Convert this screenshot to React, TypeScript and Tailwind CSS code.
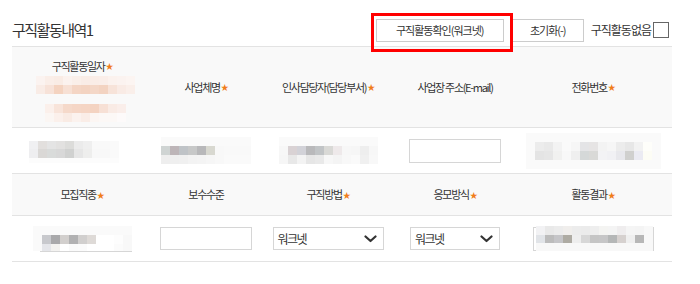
import React from "react";

type MosaicProps = { rows: string[][]; cw?: number; rh?: number[]; className?: string };

function Mosaic({ rows, cw = 9, rh, className = "" }: MosaicProps) {
  return (
    <div className={"flex flex-col " + className}>
      {rows.map((r, i) => (
        <div key={i} className="flex">
          {r.map((c, j) => (
            <div key={j} style={{ background: c, width: cw, height: rh ? rh[i] : 9 }} />
          ))}
        </div>
      ))}
    </div>
  );
}

const Star = () => <span className="text-[#f07d1b] text-[8px] ml-[1px]">★</span>;

const Head = ({ children, star }: { children: React.ReactNode; star?: boolean }) => (
  <div className="flex items-center justify-center text-[11px] tracking-[-1.3px] text-[#333]">
    <span>{children}</span>
    {star && <Star />}
  </div>
);

const Chevron = () => (
  <svg width="13" height="8" viewBox="0 0 13 8" className="shrink-0">
    <path d="M1.5 1.5 L6.5 6 L11.5 1.5" fill="none" stroke="#333" strokeWidth="2.2" strokeLinecap="round" strokeLinejoin="round" />
  </svg>
);

const Select = ({ w }: { w: string }) => (
  <div className={"h-[23px] border border-[#d6d6d6] bg-white flex items-center justify-between pl-[4px] pr-[6px] " + w}>
    <span className="text-[12px] tracking-[-1.5px] text-[#333]">워크넷</span>
    <Chevron />
  </div>
);

const cols = "grid grid-cols-[140px_108px_136px_118px_158px] border-b border-[#e3e3e3]";

export default function App() {
  const L = "#fbf3f0";
  const g = "#f9f9f9";
  return (
    <div className="relative w-[700px] h-[284px] bg-white" style={{ fontFamily: '"Noto Sans CJK KR", "Noto Sans", sans-serif' }}>
      <div className="ml-[12px] w-[660px]">
        <div className="h-[47px] pt-[14px] flex items-center justify-between border-b border-[#e3e3e3]">
          <div className="text-[15px] tracking-[-1.5px] text-[#333] leading-none mt-[-2px]">구직활동내역1</div>
          <div className="flex items-center pr-[3px]">
            <button className="w-[128px] h-[23px] border border-[#ccc] bg-white text-[11px] tracking-[-1px] text-[#333]">구직활동확인(워크넷)</button>
            <button className="ml-[8px] w-[72px] h-[23px] border border-[#ccc] bg-white text-[11px] tracking-[-1px] text-[#333]">초기화(-)</button>
            <span className="ml-[7px] text-[12px] tracking-[-1px] text-[#333]">구직활동없음</span>
            <span className="ml-[2px] w-[16px] h-[16px] border border-[#666] bg-white" />
          </div>
        </div>

        <div className={cols + " h-[81px] bg-[#f9f9f9]"}>
          <div className="flex flex-col items-center pt-[11px]">
            <Head star>구직활동일자</Head>
            <Mosaic
              className="mt-[1px] ml-[7px]"
              rows={[
                [L, "#faeee8", "#f9ece5", "#fbf2ee", "#faefe9", "#f9ece6", "#faede7", "#faeee9", "#fbf2ee", L, "#fcf5f2"],
                ["#f9ece6", "#f7e2d8", "#f4d3c0", "#f7e0d4", "#f4d5c4", "#f3d3c1", "#f4d7c7", "#f3d3c1", "#f7e3d9", "#f9ebe5", "#faefea"],
              ]}
            />
            <Mosaic
              className="mt-[10px] ml-[7px]"
              rows={[
                ["#fbf0eb", "#f8e4da", "#f5d9ca", "#f5d6c6", "#f5d5c4", "#f4d3c1", "#f7e0d5", "#f9ebe5", "#faeeea"],
                ["#fbf6f3", "#fbf0eb", "#f9ebe4", "#fbf2ee", "#faede7", "#fcf6f3", "#fcf8f6", "#fcf8f6", "#fdfafa"],
              ]}
            />
          </div>
          <Head star>사업체명</Head>
          <Head star>인사담당자(담당부서)</Head>
          <Head>사업장 주소(E-mail)</Head>
          <Head star>전화번호</Head>
        </div>

        <div className={cols + " h-[46px]"}>
          <div className="flex items-center justify-center">
            <Mosaic
              className="mr-[16px] mt-[2px]"
              rows={[
                ["#f0f0f2", "#e2dfdd", "#e4e4e4", "#e2e1e0", "#dcdcda", "#ebebeb", "#efefef", g, g, "#fafafa"],
                ["#eeeef0", "#dad8d6", "#d9dbda", "#d8d8d8", "#d0d1d0", "#e6e6e6", "#eeeeed", "#f8f8f8", "#f8f8f8", "#fafafa"],
                Array(10).fill("#fcfcfc"),
              ]}
              rh={[8, 9, 5]}
            />
          </div>
          <div className="flex items-center justify-center">
            <Mosaic
              rows={[
                Array(10).fill("#fafafa"),
                ["#cfd4d3", "#bdb5b8", "#bfc3c7", "#c7c8c8", "#b8b8ba", "#d8d8d0", "#f8f8f8", g, g, g],
                ["#eeeeee", "#efefef", "#f0f0f0", "#f3f3f3", "#f4f4f4", "#f6f6f6", "#f8f8f8", "#fafafa", "#fafafa", "#fafafa"],
              ]}
            />
          </div>
          <div className="flex items-center justify-center">
            <Mosaic
              rows={[
                Array(11).fill("#fafafa"),
                ["#f7f7f7", "#d9d2d4", "#d2d2d8", "#b9b9bb", "#c1c4c6", "#d9d9d6", "#eee9ea", "#f7f7f7", "#f6f6f6", "#eeeeee", "#f7f7f7"],
                ["#f6f6f6", "#e8e8e8", "#f3f3f3", "#e6e6e6", "#e9e9e9", "#f7f7f7", "#f4f4f4", "#f8f8f8", "#fafafa", "#f0f0f0", "#f8f8f8"],
              ]}
            />
          </div>
          <div className="flex items-center justify-center">
            <div className="w-[92px] h-[24px] border border-[#d6d6d6] bg-white" />
          </div>
          <div className="flex items-center justify-center">
            <Mosaic
              rows={[
                Array(15).fill("#fafafa"),
                ["#fafafa", "#ececec", "#e9e9e9", "#f3f3f3", "#fafafa", "#f6f6f6", "#e4e4e6", "#e6e4e4", "#f3f3f3", "#f6f6f6", "#ececec", "#e7e7e7", "#f2f2f2", "#fefefa", "#fafafa"],
                ["#fafafa", "#e4e4e4", "#e6e6e6", "#f1f1f0", "#f8f8f8", "#efefef", "#d5d8d8", "#d9d9d7", "#f3f3f5", "#f1f1f4", "#e8e8ec", "#d0d0ce", "#ebebf2", "#fdfdf5", "#fafafa"],
                Array(15).fill("#fafafa"),
              ]}
            />
          </div>
        </div>

        <div className={cols + " h-[42px] bg-[#f9f9f9]"}>
          <Head star>모집직종</Head>
          <Head>보수수준</Head>
          <Head star>구직방법</Head>
          <Head star>응모방식</Head>
          <Head star>활동결과</Head>
        </div>

        <div className={cols + " h-[46px]"}>
          <div className="flex items-center justify-center">
            <div className="flex flex-col mt-[1px]">
              <Mosaic
                rows={[
                  Array(11).fill("#fafafa"),
                  ["#fafafa", "#c8c9cd", "#a9a9ab", "#d2cfcd", "#b1b1b2", "#d1cfce", "#dedad7", "#ffffff", "#ffffff", "#fdfdfd", "#f8f8f8"],
                  ["#fafafa", "#e5e6ea", "#f3f2f0", "#ffffff", "#fafafa", "#fbfbfb", "#ffffff", "#ffffff", "#ffffff", "#fbfbfb", "#f8f8f8"],
                ]}
                rh={[9, 9, 7]}
              />
              <div className="ml-[7px] h-[1px] bg-[#d6d6d6]" />
            </div>
          </div>
          <div className="flex items-center justify-center">
            <div className="w-[92px] h-[23px] border border-[#d6d6d6] bg-white" />
          </div>
          <div className="flex items-center justify-center">
            <Select w="w-[111px]" />
          </div>
          <div className="flex items-center justify-center">
            <Select w="w-[90px]" />
          </div>
          <div className="flex items-center justify-center">
            <div className="relative w-[121px] h-[24px] border border-[#d6d6d6] bg-white">
              <Mosaic
                className="absolute left-[2px] top-[-2px]"
                rows={[
                  ["#f2f2f4", "#e9e9e9", "#ececec", "#f0eeec", "#ececec", "#ebebeb", "#eeeeee", "#f4f4f2", "#f4f4f4", "#efedee", "#f5f5f5", "#f4f4f4", "#f8f8f8"],
                  ["#e1e4e8", "#bcbcbc", "#c5c5c8", "#aeaba3", "#eeeeee", "#d7d7d7", "#c5c5c5", "#c6c6c7", "#b5b7b7", "#d6d1cf", "#efefef", "#b7b7b7", "#f8f8f8"],
                  Array(13).fill("#f8f8f8"),
                ]}
                rh={[9, 8, 8]}
              />
            </div>
          </div>
        </div>
      </div>

      <div className="absolute left-[371px] top-[13px] w-[142px] h-[39px] border-[3px] border-[#f00]" />
    </div>
  );
}
